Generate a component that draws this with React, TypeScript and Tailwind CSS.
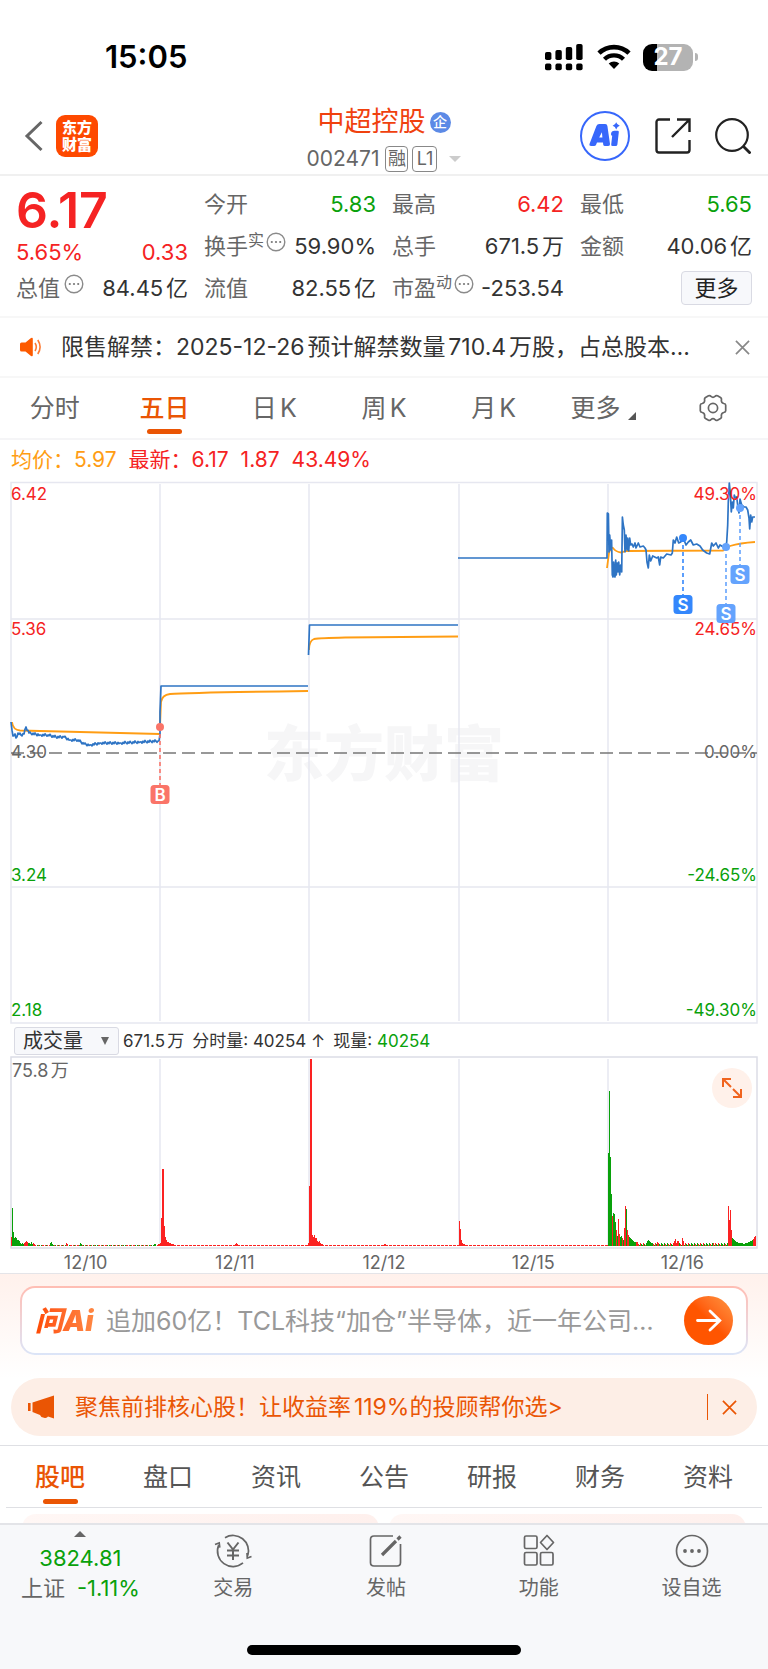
import { ReactNode, useState } from "react";
import clsx from "clsx";

type Bar = { x: number; h: number; up: boolean };

const PERIODS = ["分时", "五日", "日K", "周K", "月K", "更多"];
const SECTIONS = ["股吧", "盘口", "资讯", "公告", "研报", "财务", "资料"];
const DATES = ["12/10", "12/11", "12/12", "12/15", "12/16"];
const DAY_LINES = [160, 309, 459, 608];
const BASELINE = 1246;

const PRICE_LABELS = [
  { y: 500, price: "6.42", percent: "49.30%", color: "fill-[#f52323]" },
  { y: 635, price: "5.36", percent: "24.65%", color: "fill-[#f52323]" },
  { y: 758, price: "4.30", percent: "0.00%", color: "fill-[#666]" },
  { y: 881, price: "3.24", percent: "-24.65%", color: "fill-[#09a10b]" },
  { y: 1016, price: "2.18", percent: "-49.30%", color: "fill-[#09a10b]" },
];

const TRADES = [
  { x: 160, y: 727, box: 785, letter: "B", color: "#fa7468" },
  { x: 683, y: 538, box: 595, letter: "S", color: "#3487fc" },
  { x: 726, y: 547, box: 604, letter: "S", color: "#64a3fd" },
  { x: 740, y: 508, box: 565, letter: "S", color: "#64a3fd" },
];

// minute prices of the first day, the anchors between which the line wobbles
const FIRST_DAY = [
  [11, 722], [13, 736], [15, 734], [16, 738], [18, 733], [21, 735], [24, 734],
  [26, 727], [29, 733], [40, 735], [48, 735], [56, 737], [64, 737], [70, 740],
  [78, 740], [84, 744], [90, 745], [100, 743], [120, 743], [140, 742], [158, 741],
];

const firstDayPath = () => {
  const points: string[] = [];
  FIRST_DAY.forEach(([x, y], i) => {
    points.push(`${x},${y}`);
    const next = FIRST_DAY[i + 1];
    if (!next) return;
    for (let step = x + 1; step < next[0]; step++) {
      const base = y + ((next[1] - y) * (step - x)) / (next[0] - x);
      points.push(`${step},${(base + ((step * 7) % 5) * 0.6 - 1.2).toFixed(1)}`);
    }
  });
  return `${points.join(" ")} 159,741 160,734 160,712 161,686 308,686`;
};

const LAST_DAY =
  "458,558 607,558 607.3,513 608.4,514 609,552 609.7,535 610.7,550 611.6,540 612.3,575 613,577 613.7,562 614.3,575 615,577 615.7,560 616.3,575 617.3,563 618,572 618.7,562 619.7,575 620.7,565 621.7,572 622.4,517 623.3,525 624.3,530 625,552 626,535 627,550 627.7,538 628.7,551 629.7,538 630.7,545 632,544 633.3,547 635,543 636,548 638.3,543 640,547 643.3,546 645,548 646,550 647,562 648.3,568 649.3,555 650.7,561 652.7,556 656.7,558 658.3,557 659.7,565 660.7,557 663.3,558 666.7,554 671,555 672.3,553 673.3,540 675,543 676.7,537 678.7,543 680.7,542 683.3,538 686,545 688.3,542 690.7,540 693.3,545 696.7,544 700,546 702.7,550 706.7,553 709.7,554 711.7,543 713.3,546 716,543 718.3,548 720,545 723.3,547 725.7,547 726.7,542 727.7,525 728.3,502 729.3,483 730.3,493 731.3,512 732.3,502 733.3,508 734.3,495 735.3,498 736.7,497 738,508 739,513 740,499 741.7,505 744,507 746,507 747.7,510 749,518 749.7,529 750.7,515 751.7,522 752.7,517 755,517";

const volumeBars = () => {
  const bars: Bar[] = [];
  const add = (start: number, up: boolean, heights: number[]) =>
    heights.forEach((h, i) => bars.push({ x: start + i, h, up }));

  // quiet trading between the peaks
  for (let x = 34; x < 755; x++) {
    const lastDay = x > 630;
    const h = lastDay ? 1 + ((x * 5) % 3) : (x * 11) % 4 ? 1 : 0;
    if (h) bars.push({ x, h, up: lastDay ? (x * 7) % 5 < 2 : x > 160 || (x * 3) % 7 < 4 });
  }

  add(11, true, [9]);
  add(12, false, [38, 14, 8, 9, 8, 6, 6, 5, 3, 2, 3, 2]);
  add(24, true, [3, 4, 5, 4]);
  add(28, false, [3, 3, 2, 4, 2]);
  add(33, true, [3, 2]);
  add(50, false, [3, 4, 2]);
  add(66, true, [3, 2]);
  add(80, false, [3, 2]);
  add(154, false, [2, 2]);
  add(158, true, [2, 2, 3, 28, 77, 77, 20, 9, 6, 4, 4, 3, 3, 2, 2, 2]);
  add(235, true, [2, 3, 2]);
  add(308, true, [3, 60, 187, 187, 11, 9, 11, 8, 8, 5, 4, 5, 3, 2, 2]);
  add(384, true, [2, 2]);
  add(459, true, [25, 17, 6, 3, 2, 2]);
  add(608, false, [93, 155, 89, 52]);
  add(612, true, [30]);
  add(613, false, [33, 32, 24]);
  add(616, true, [16]);
  add(617, false, [10]);
  add(618, true, [27, 12]);
  add(620, false, [9, 10]);
  add(622, true, [8]);
  add(623, false, [6]);
  add(624, true, [18, 40]);
  add(626, false, [37]);
  add(627, true, [16, 11]);
  add(629, false, [9, 8, 7, 6, 5, 4, 4]);
  add(636, true, [4, 4]);
  add(646, false, [3, 5, 6, 5, 4, 3]);
  add(657, true, [4]);
  add(674, true, [5, 7, 3, 5, 5]);
  add(682, true, [8, 5]);
  add(713, true, [3]);
  add(728, true, [40, 26, 36, 16]);
  add(732, false, [8, 7, 6, 5, 4, 4, 3, 2, 3, 3, 3, 2, 2, 3, 3, 3, 4, 4, 5, 5, 6, 7]);
  add(753, true, [7, 9, 10]);
  return bars;
};

const BARS = volumeBars();

const MoreDots = () => (
  <svg viewBox="0 0 20 20" className="size-5 shrink-0" aria-hidden>
    <circle cx="10" cy="10" r="8.8" fill="none" stroke="#8a8a8a" strokeWidth="1.4" />
    <g fill="#777">
      <circle cx="5.8" cy="10" r="1.1" />
      <circle cx="10" cy="10" r="1.1" />
      <circle cx="14.2" cy="10" r="1.1" />
    </g>
  </svg>
);

const Cross = ({ className }: { className: string }) => (
  <svg viewBox="0 0 16 16" className={className} aria-hidden>
    <path d="M1 1l14 14M15 1L1 15" fill="none" stroke="currentColor" strokeWidth="1.8" />
  </svg>
);

const StatusBar = () => (
  <div className="flex h-24 items-center justify-between pt-[18px] pr-[70px] pl-[105px]">
    <span className="text-[31px] leading-9 font-semibold text-black">15:05</span>
    <div className="flex items-center gap-3">
      <svg viewBox="0 0 40 28" className="h-7 w-10" aria-hidden>
        <rect x="0" y="9" width="6.4" height="8" rx="1.8" />
        <rect x="10.4" y="7" width="6.4" height="10" rx="1.8" />
        <rect x="20.8" y="4" width="6.4" height="13" rx="1.8" />
        <rect x="31.2" y="1" width="6.4" height="16" rx="1.8" />
        <rect x="0" y="20.6" width="6.4" height="6.6" rx="1.8" />
        <rect x="10.4" y="20.6" width="6.4" height="6.6" rx="1.8" />
        <rect x="20.8" y="20.6" width="6.4" height="6.6" rx="1.8" />
        <rect x="31.2" y="20.6" width="6.4" height="6.6" rx="1.8" />
      </svg>
      <svg viewBox="0 0 34 26" className="h-[26px] w-[34px]" aria-hidden>
        <path d="M2 9.2a21.5 21.5 0 0 1 30 0" fill="none" stroke="#000" strokeWidth="4.6" />
        <path d="M7.5 15.2a13.6 13.6 0 0 1 19 0" fill="none" stroke="#000" strokeWidth="4.4" />
        <path d="M11.7 19.6a7.7 7.7 0 0 1 10.6 0L17 25z" />
      </svg>
      <div className="flex items-center gap-0.5">
        <div className="flex h-[27px] w-[50px] items-center justify-center rounded-[9px] bg-[linear-gradient(90deg,#000_27%,#b3b3b3_27%)] text-[24px] leading-none font-bold text-white">
          27
        </div>
        <span className="h-2 w-[3px] rounded-r-full bg-[#b3b3b3]" />
      </div>
    </div>
  </div>
);

const Header = () => (
  <header className="flex h-20 items-center justify-between border-b-2 border-[#f0f0f0] pt-0.5 pr-[17px] pl-6">
    <div className="flex w-[165px] items-center gap-3">
      <button aria-label="返回">
        <svg viewBox="0 0 20 32" className="h-8 w-5" aria-hidden>
          <path d="M17.5 2L3 16l14.5 14" fill="none" stroke="#666" strokeWidth="3" />
        </svg>
      </button>
      <a
        href="#home"
        className="flex size-[42px] flex-col items-center justify-center rounded-[9px] bg-[#fe4900] text-[15px] leading-[17px] font-black text-white"
      >
        <span>东方</span>
        <span>财富</span>
      </a>
    </div>
    <div className="flex flex-col items-center gap-1.5 pt-1">
      <h1 className="flex items-center gap-1 text-[27px] leading-9 text-[#f0410e]">
        中超控股
        <span className="flex size-[21px] items-center justify-center rounded-full bg-[#5c8ae6] text-[14px] leading-none font-medium text-white">
          企
        </span>
      </h1>
      <div className="flex items-center gap-1 text-[21px] leading-[26px] text-[#666]">
        <span className="mr-0.5">002471</span>
        <span className="flex h-[26px] w-[23px] items-center justify-center rounded-[4px] border border-[#888] text-[18px]">
          融
        </span>
        <span className="flex h-[26px] w-[25px] items-center justify-center rounded-[4px] border border-[#888] text-[18px]">
          L1
        </span>
        <svg viewBox="0 0 12 6" className="ml-2 h-1.5 w-3" aria-hidden>
          <path d="M0 0h12L6 6z" fill="#ccc" />
        </svg>
      </div>
    </div>
    <div className="flex w-[172px] items-center justify-between">
      <button aria-label="Ai">
        <svg viewBox="0 0 52 52" className="size-[52px]" aria-hidden>
          <circle cx="26" cy="26" r="24" fill="none" stroke="#3767fb" strokeWidth="2" />
          <path
            d="M10.6 33.8L17.4 16q.8-2 2.8-2h6q2 0 2.200 2L31 34q.2 2-1.800 2h-3.200q-1.600 0-1.800-1.600l-.2-1.800h-6l-.8 1.900q-.6 1.500-2.200 1.500h-2.800q-2.400 0-1.600-2.200zM20.200 27.400h3.200l-.5-5.200z"
            fill="#3767fb"
            fillRule="evenodd"
          />
          <path d="M35.400 20.800h3.200q1.400 0 1.200 1.400l-1.400 12.200q-.2 1.600-1.800 1.600h-3q-1.600 0-1.400-1.600l1-8.600q-1.400 0-1.200-1.800.4-3.200 3.400-3.200z" fill="#3767fb" />
          <path d="M37.200 12.200q.9 2.700 3.600 3.600-2.700.9-3.600 3.600-.9-2.700-3.600-3.600 2.700-.9 3.600-3.600z" fill="#3767fb" />
        </svg>
      </button>
      <button aria-label="分享">
        <svg viewBox="0 0 36 36" className="size-9" aria-hidden>
          <path
            d="M15 1.5H4A2.5 2.5 0 0 0 1.5 4v28A2.5 2.5 0 0 0 4 34.5h28a2.5 2.5 0 0 0 2.5-2.5V22M22 1.5h12.500V14M34 2L17 19"
            fill="none"
            stroke="#222"
            strokeWidth="2.4"
          />
        </svg>
      </button>
      <button aria-label="搜索">
        <svg viewBox="0 0 36 36" className="size-9" aria-hidden>
          <circle cx="17" cy="17" r="15.8" fill="none" stroke="#222" strokeWidth="2.2" />
          <path d="M28 28l7.5 7.5" fill="none" stroke="#222" strokeWidth="2.8" />
        </svg>
      </button>
    </div>
  </header>
);

type QuoteProps = {
  label: string;
  value: string;
  sup?: string;
  info?: boolean;
  color?: string;
};

const Quote = ({ label, value, sup, info, color = "text-[#333]" }: QuoteProps) => (
  <div className="flex h-[42px] items-center justify-between whitespace-nowrap">
    <span className="flex items-center text-[#666]">
      {label}
      {sup && <sup className="top-0 mb-3 text-[16px] leading-none">{sup}</sup>}
      {info && (
        <span className={clsx("mb-2", sup ? "ml-0.5" : "ml-1")}>
          <MoreDots />
        </span>
      )}
    </span>
    <span className={color}>{value}</span>
  </div>
);

const Quotes = () => (
  <section className="grid grid-cols-4 gap-4 border-b-2 border-[#f7f7f7] px-4 pt-[7px] pb-[7px] text-[22px] leading-[30px]">
    <div>
      <div className="flex h-[54px] items-center text-[50px] leading-none font-semibold text-[#f52323]">
        6.17
      </div>
      <div className="flex h-[30px] items-center justify-between text-[#f52323]">
        <span>5.65%</span>
        <span>0.33</span>
      </div>
      <Quote label="总值" info value="84.45亿" />
    </div>
    <div>
      <Quote label="今开" value="5.83" color="text-[#09a10b]" />
      <Quote label="换手" sup="实" info value="59.90%" />
      <Quote label="流值" value="82.55亿" />
    </div>
    <div>
      <Quote label="最高" value="6.42" color="text-[#f52323]" />
      <Quote label="总手" value="671.5万" />
      <Quote label="市盈" sup="动" info value="-253.54" />
    </div>
    <div>
      <Quote label="最低" value="5.65" color="text-[#09a10b]" />
      <Quote label="金额" value="40.06亿" />
      <div className="flex h-[42px] items-center justify-end">
        <button className="h-[34px] w-[71px] rounded-[4px] border border-[#d9dae3] bg-[#f7f8fb] text-[22px] leading-8 text-[#222]">
          更多
        </button>
      </div>
    </div>
  </section>
);

const Notice = () => (
  <div className="flex h-[60px] items-center border-b-2 border-[#f7f7f7] pr-[18px] pl-5">
    <svg viewBox="0 0 22 20" className="mr-[19px] h-5 w-[22px] shrink-0" aria-hidden>
      <path d="M1.5 5.5h4L11 1q1.800-1 1.800 1v16q0 2-1.800 1l-5.500-4.500h-4Q0 14.500 0 13V7q0-1.500 1.500-1.500z" fill="#fd5a00" />
      <path d="M15 6q2.600 4 0 8M17.800 3q4.600 7 0 14" fill="none" stroke="#fd7a33" strokeWidth="1.6" />
    </svg>
    <p className="flex-1 truncate text-[23px] leading-8 text-[#333]">
      限售解禁：2025-12-26预计解禁数量710.4万股，占总股本…
    </p>
    <button aria-label="关闭" className="text-[#888]">
      <Cross className="size-[15px]" />
    </button>
  </div>
);

const PeriodTabs = () => {
  const [active, setActive] = useState("五日");

  return (
    <nav className="grid h-[62px] grid-cols-7 border-b-2 border-[#f5f5f7]">
      {PERIODS.map((period) => (
        <button
          key={period}
          onClick={() => setActive(period)}
          className={clsx(
            "relative flex items-center justify-center text-[25px] leading-8",
            active === period ? "font-medium text-[#ea5504]" : "text-[#666]"
          )}
        >
          {period}
          {period === "更多" && (
            <svg viewBox="0 0 8 8" className="mt-4 ml-2 size-2" aria-hidden>
              <path d="M8 0v8H0z" fill="#555" />
            </svg>
          )}
          {active === period && (
            <span className="absolute bottom-1 h-[5px] w-[35px] rounded-full bg-[#ea5504]" />
          )}
        </button>
      ))}
      <button aria-label="设置" className="flex items-center justify-center">
        <svg viewBox="0 0 28 28" className="size-7" fill="none" stroke="#666" strokeWidth="1.7" aria-hidden>
          <path
            d="M9.500 1.800q1.500-.8 2.500.6 2 1.800 4 0 1-1.400 2.500-.6l3 1.700q1.300.8.900 2.300-.4 3 2.400 3.700 1.900.2 1.900 1.700v5.600q0 1.500-1.900 1.700-2.800.7-2.400 3.700.4 1.500-.9 2.300l-3 1.700q-1.500.8-2.500-.6-2-1.800-4 0-1 1.400-2.500.6l-3-1.700q-1.300-.8-.9-2.300.4-3-2.400-3.700-1.900-.2-1.900-1.700v-5.600q0-1.500 1.900-1.700 2.800-.7 2.400-3.700-.4-1.500.9-2.300z"
          />
          <circle cx="14" cy="14" r="4.6" />
        </svg>
      </button>
    </nav>
  );
};

const PriceChart = () => (
  <svg viewBox="0 480 768 546" className="block w-full" role="img" aria-label="五日走势">
    <text
      x="384"
      y="776"
      textAnchor="middle"
      className="fill-[#f6f6f7] text-[60px] font-black"
    >
      东方财富
    </text>
    <g stroke="#e6e7f0" strokeWidth="1.5" fill="none">
      <rect x="11" y="482.5" width="746" height="540.5" />
      <path d="M11 619H757M11 887H757" />
      {DAY_LINES.map((x) => (
        <path key={x} d={`M${x} 484V1021`} />
      ))}
    </g>
    <path d="M11 753H757" stroke="#777" strokeWidth="1.5" strokeDasharray="13 6" />
    <g fill="none" stroke="#ff9d14" strokeWidth="1.8">
      <path d="M12 722Q13 730 20 730.5L160 734" />
      <path d="M160 727L161 702Q162 695 170 694Q190 692.5 308 691" />
      <path d="M309 650Q309 641 314 639Q320 638 345 637.5L458 636.5" />
      <path d="M607 568L609 553Q611 546 613 548Q616 552 621 552.5L626 551L723 550.5L730 546Q740 543 755 542" />
    </g>
    <g fill="none" stroke="#2e74c4" strokeWidth="1.7" strokeLinejoin="round">
      <polyline points={firstDayPath()} />
      <polyline points="308.5,655 309.5,625 458,625" />
      <polyline points={LAST_DAY} />
    </g>
    {PRICE_LABELS.map(({ y, price, percent, color }) => (
      <g key={price} className={clsx("text-[17px]", color)}>
        <text x="11" y={y}>{price}</text>
        <text x="757" y={y} textAnchor="end">{percent}</text>
      </g>
    ))}
    {TRADES.map(({ x, y, box, letter, color }) => (
      <g key={x}>
        <path d={`M${x} ${y}V${box}`} stroke={color} strokeWidth="1.6" strokeDasharray="4 3" />
        <circle cx={x} cy={y} r="4" fill={color} />
        <rect x={x - 9.5} y={box} width="19" height="19" rx="3.5" fill={color} />
        <text x={x} y={box + 15.5} textAnchor="middle" className="fill-white text-[17px] font-semibold">
          {letter}
        </text>
      </g>
    ))}
  </svg>
);

const VolumeHeader = () => (
  <div className="flex h-[30px] items-center gap-1 pl-3.5 text-[17px] leading-6 text-[#333]">
    <div className="relative">
      <select
        aria-label="指标"
        className="block h-7 w-[105px] appearance-none rounded-[3px] border border-[#d9dae3] bg-[#f7f8fb] pl-2 text-[20px] leading-[26px] text-[#333]"
      >
        <option>成交量</option>
        <option>成交额</option>
      </select>
      <svg viewBox="0 0 8 8" className="pointer-events-none absolute top-2.5 right-2.5 size-2" aria-hidden>
        <path d="M0 0h8L4 8z" fill="#666" />
      </svg>
    </div>
    <div className="flex gap-2">
      <span>671.5万</span>
      <span>分时量: 40254 ↑</span>
      <span>
        现量: <span className="text-[#09a10b]">40254</span>
      </span>
    </div>
  </div>
);

const VolumeChart = () => (
  <div className="relative">
    <svg viewBox="0 1056 768 193" className="block w-full" role="img" aria-label="成交量">
      <g stroke="#dcdde6" strokeWidth="1.5" fill="none">
        <rect x="11" y="1057" width="746" height="191" />
        {DAY_LINES.map((x) => (
          <path key={x} d={`M${x} 1059V1246`} stroke="#e6e7f0" />
        ))}
      </g>
      {BARS.map(({ x, h, up }, i) => (
        <rect
          key={i}
          x={x}
          y={BASELINE - h}
          width="1"
          height={h}
          fill={up ? "#fb2222" : "#09a10b"}
        />
      ))}
      <text x="12" y="1077" className="fill-[#666] text-[18px]">75.8万</text>
    </svg>
    <button
      aria-label="全屏"
      className="absolute top-3 right-4 flex size-10 items-center justify-center rounded-full bg-[#fff1ea]"
    >
      <svg viewBox="0 0 20 20" className="size-5" fill="none" stroke="#f0641e" strokeWidth="2" aria-hidden>
        <path d="M1 9V1h8M1 1l8 8M19 11v8h-8M19 19l-8-8" />
      </svg>
    </button>
    <div className="mx-[11px] grid h-6 grid-cols-5 items-center text-center text-[18px] text-[#666]">
      {DATES.map((date) => (
        <span key={date}>{date}</span>
      ))}
    </div>
  </div>
);

const AskAi = () => (
  <section className="border-t border-[#e4e4e8] bg-linear-to-b from-[#fff1ec] to-white px-5 pt-3 pb-[23px] [text-autospace:no-autospace]">
    <form
      onSubmit={(e) => e.preventDefault()}
      className="rounded-[15px] bg-linear-to-b from-[#ffbdb3] to-[#dbe5f8] p-[2px]"
    >
      <div className="flex h-[65px] items-center rounded-[13px] bg-white px-[13px]">
        <label
          htmlFor="ask"
          className="mr-2 w-[63px] bg-linear-to-r from-[#fe4900] to-[#ff8a45] bg-clip-text text-[28px] leading-8 font-black whitespace-nowrap text-transparent italic"
        >
          问Ai
        </label>
        <input
          id="ask"
          placeholder="追加60亿！TCL科技“加仓”半导体，近一年公司…"
          className="min-w-0 flex-1 text-[25px] leading-8 outline-none placeholder:text-[#999]"
        />
        <button aria-label="提问" className="size-[49px] rounded-full bg-linear-to-tr from-[#ff5500] from-50% to-[#ff963f]">
          <svg viewBox="0 0 49 49" className="size-[49px]" fill="none" stroke="#fff" strokeWidth="2.8" strokeLinecap="round" aria-hidden>
            <path d="M13.500 24.500h22M26 15l9.800 9.500L26 34" />
          </svg>
        </button>
      </div>
    </form>
  </section>
);

const Banner = () => (
  <div className="mx-[11px] mb-[9px] flex h-[58px] items-center rounded-full bg-[#fdeee6] pr-5 pl-[17px] text-[#ea5504]">
    <svg viewBox="0 0 27 24" className="mr-5 h-6 w-[27px] shrink-0" fill="#ea5504" aria-hidden>
      <path d="M0 8h2.600v8H0zM4.500 7.500L26 .5v23l-6-2q-1 2-4 1.300-3.200-.2-4-2.800l-7.500-3z" />
    </svg>
    <a href="#adviser" className="flex-1 text-[23px] leading-8">
      聚焦前排核心股！让收益率119%的投顾帮你选&gt;
    </a>
    <span className="mr-[14px] h-[26px] w-px bg-[#ea5504]" />
    <button aria-label="关闭">
      <Cross className="size-[15px]" />
    </button>
  </div>
);

const SectionTabs = () => {
  const [active, setActive] = useState("股吧");

  return (
    <section className="h-[78px] overflow-hidden border-t border-[#dfe0e4]">
      <nav className="mx-1.5 grid h-[62px] grid-cols-7 border-b border-[#dfe0e4]">
        {SECTIONS.map((section) => (
          <button
            key={section}
            onClick={() => setActive(section)}
            className={clsx(
              "relative flex items-center justify-center text-[25px] leading-8",
              active === section ? "font-medium text-[#ea5504]" : "text-[#555]"
            )}
          >
            {section}
            {active === section && (
              <span className="absolute bottom-[3px] h-[5px] w-[35px] rounded-full bg-[#ea5504]" />
            )}
          </button>
        ))}
      </nav>
      <div className="mx-[22px] mt-1.5 grid grid-cols-2 gap-2.5">
        <div className="h-10 rounded-[14px] bg-linear-to-r from-[#fff7f5] to-[#fef0ed]" />
        <div className="h-10 rounded-[14px] bg-linear-to-r from-[#fff7f5] to-[#fef0ed]" />
      </div>
    </section>
  );
};

const NavItem = ({ label, children }: { label: string; children: ReactNode }) => (
  <a href="#nav" className="flex flex-col items-center gap-1 pt-2 text-[20px] leading-[30px] text-[#666]">
    <svg viewBox="0 0 38 36" className="h-9 w-[38px]" fill="none" stroke="#666" strokeWidth="1.7" aria-hidden>
      {children}
    </svg>
    {label}
  </a>
);

const BottomNav = () => (
  <footer className="border-t-2 border-[#e3e4e8] bg-[#f7f8fa] pb-3.5">
    <div className="grid h-[120px] grid-cols-5 pl-1">
      <a href="#index" className="flex flex-col items-center pt-1.5 text-[22px] leading-[30px] text-[#09a10b]">
        <svg viewBox="0 0 12 6" className="h-1.5 w-3" aria-hidden>
          <path d="M0 6h12L6 0z" fill="#666" />
        </svg>
        <span className="mt-1.5">3824.81</span>
        <span className="flex gap-3">
          <span className="text-[#666]">上证</span>-1.11%
        </span>
      </a>
      <NavItem label="交易">
        <path d="M11 4.700A15.500 15.500 0 0 1 33.800 22.600M29 29.900A15.500 15.500 0 0 1 4.600 12.300M1 11.500l4.200-1.500.6 4.600M37.500 23.500l-4.200 1.500-.3-5" />
        <path d="M13.500 9.500l5.500 7 5.500-7M19 16.500V27M13 17.500h12M13 22.500h12" strokeWidth="2" />
      </NavItem>
      <NavItem label="发帖">
        <path d="M26 3H7q-3.500 0-3.500 3.500v23Q3.500 33 7 33h23q3.500 0 3.500-3.500V11" />
        <path d="M15 22L29 8" strokeWidth="3.2" />
        <path d="M30.500 6.500L33.500 3.500" strokeWidth="3.2" />
      </NavItem>
      <NavItem label="功能">
        <rect x="4.5" y="3" width="12.5" height="12.5" rx="1.5" />
        <rect x="4.5" y="19.5" width="12.5" height="12.5" rx="1.5" />
        <rect x="20.5" y="19.5" width="12.5" height="12.5" rx="1.5" />
        <path d="M27 2.500l6.500 7-6.500 7-6.500-7z" strokeLinejoin="round" />
      </NavItem>
      <NavItem label="设自选">
        <circle cx="19" cy="18" r="15.5" />
        <g fill="#666" stroke="none">
          <circle cx="12" cy="18" r="1.9" />
          <circle cx="19" cy="18" r="1.9" />
          <circle cx="26" cy="18" r="1.9" />
        </g>
      </NavItem>
    </div>
    <div className="mx-auto h-[10px] w-[274px] rounded-full bg-black" />
  </footer>
);

export default function App() {
  return (
    <main className="bg-white [font-family:Inter,'Noto_Sans_CJK_SC',sans-serif] [text-autospace:normal]">
      <StatusBar />
      <Header />
      <Quotes />
      <Notice />
      <PeriodTabs />
      <div className="flex h-10 items-center gap-3 px-[11px] text-[21px] leading-7 text-[#f52323]">
        <span className="text-[#ff9d14]">均价：5.97</span>
        <span>最新：6.17</span>
        <span>1.87</span>
        <span>43.49%</span>
      </div>
      <PriceChart />
      <VolumeHeader />
      <VolumeChart />
      <AskAi />
      <Banner />
      <SectionTabs />
      <BottomNav />
    </main>
  );
}
